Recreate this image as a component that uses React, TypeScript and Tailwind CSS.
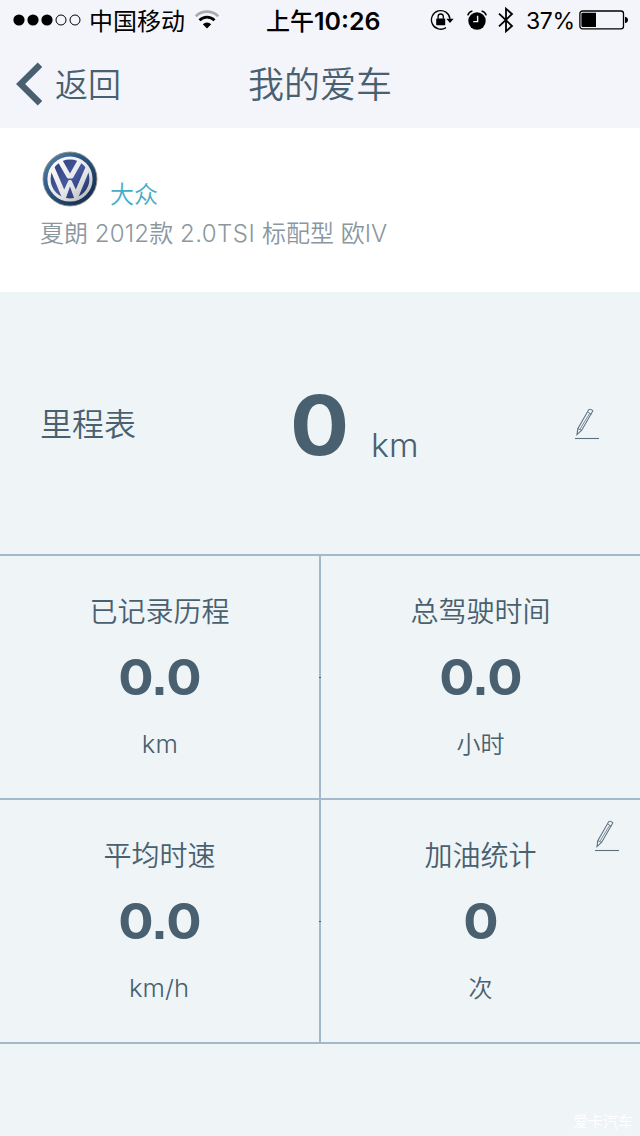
import type { ReactNode } from "react";

const LATIN_CJK = "font-['Inter','Noto_Sans_CJK_SC',sans-serif]";

function SignalDots() {
  return (
    <svg width="68" height="12" viewBox="0 0 68 12" fill="none" stroke="#000">
      <circle cx="6" cy="6" r="5.6" fill="#000" stroke="none" />
      <circle cx="20" cy="6" r="5.6" fill="#000" stroke="none" />
      <circle cx="34" cy="6" r="5.6" fill="#000" stroke="none" />
      <circle cx="48" cy="6" r="5" strokeWidth="1" />
      <circle cx="62" cy="6" r="5" strokeWidth="1" />
    </svg>
  );
}

function Wifi() {
  return (
    <svg width="26" height="20" viewBox="0 0 26 20" fill="none">
      <path d="M1.8 6.2a16 16 0 0 1 22.4 0" stroke="#a9aaae" strokeWidth="2.6" />
      <path d="M5.5 10.2a10.6 10.6 0 0 1 15 0" stroke="#000" strokeWidth="2.8" />
      <path d="M13 18.6 8.8 14.2a6 6 0 0 1 8.4 0z" fill="#000" />
    </svg>
  );
}

function RotationLock() {
  return (
    <svg width="24" height="22" viewBox="0 0 24 22" fill="none" stroke="#000">
      <path d="M16 18.6A9.3 9.3 0 1 1 20 9.8" strokeWidth="1.3" />
      <path d="M16.4 9.7h7.2l-3.6 4.2z" fill="#000" stroke="none" />
      <rect x="6.2" y="9.4" width="9" height="6.8" rx=".6" fill="#000" stroke="none" />
      <path d="M8.1 9.7V7.6a2.6 2.6 0 0 1 5.2 0v2.1" strokeWidth="1.3" />
    </svg>
  );
}

function Alarm() {
  return (
    <svg width="20" height="20" viewBox="0 0 20 20" fill="none" stroke="#000">
      <circle cx="10" cy="11" r="8.7" fill="#000" stroke="none" />
      <path d="M.8 5.4A6 6 0 0 1 5.4 1M14.6 1a6 6 0 0 1 4.6 4.4" strokeWidth="1.6" />
      <path d="M10.6 5.8v5.8H6.2" stroke="#f4f5fa" strokeWidth="1.4" />
    </svg>
  );
}

function Bluetooth() {
  return (
    <svg width="16" height="28" viewBox="0 0 16 28" fill="none" stroke="#000" strokeWidth="1.8">
      <path d="M1 7.6 14 20 8 25.3V2.7L14 8 1 20.4" />
    </svg>
  );
}

function Battery() {
  return (
    <svg width="50" height="20" viewBox="0 0 50 20">
      <rect x=".9" y="1" width="43.6" height="17.8" rx="2.6" fill="none" stroke="#000" strokeWidth="1.3" />
      <path d="M3.8 2.7H17v14.4H3.8a1.4 1.4 0 0 1-1.4-1.4V4.1a1.4 1.4 0 0 1 1.4-1.4z" />
      <path d="M46 6.8c4 .6 4 5.7 0 6.3z" />
    </svg>
  );
}

function Emblem() {
  return (
    <svg width="56" height="56" viewBox="0 0 56 56" fill="none">
      <defs>
        <linearGradient id="ring" x1="0" y1="0" x2="1" y2="1">
          <stop offset="0" stopColor="#5f8fb5" />
          <stop offset=".35" stopColor="#2f5c88" />
          <stop offset="1" stopColor="#0c2444" />
        </linearGradient>
        <linearGradient id="field" x1="0" y1="0" x2="1" y2="1">
          <stop offset="0" stopColor="#2c3a78" />
          <stop offset=".5" stopColor="#45589c" />
          <stop offset="1" stopColor="#1c2a66" />
        </linearGradient>
        <linearGradient id="chrome" gradientUnits="userSpaceOnUse" x1="8" y1="6" x2="48" y2="50">
          <stop offset="0" stopColor="#ffffff" />
          <stop offset=".6" stopColor="#e4e5e8" />
          <stop offset="1" stopColor="#b3b1b1" />
        </linearGradient>
        <clipPath id="inner">
          <circle cx="28" cy="28" r="22" />
        </clipPath>
      </defs>
      <circle cx="28" cy="28" r="27" fill="url(#ring)" stroke="#8f8c86" strokeWidth=".9" />
      <circle cx="28" cy="28" r="21" fill="url(#field)" stroke="url(#chrome)" strokeWidth="3.2" />
      <g clipPath="url(#inner)" fill="url(#chrome)">
        <path d="M14.2 8h5.6L28 22.6 36.2 8h5.6L31.2 26.4q-.6 1-1.6 1h-3.2q-1 0-1.6-1z" />
        <path d="M6.6 14.5h5.2l10.4 24 4-8.6q.5-1 1.3-1h1q.8 0 1.3 1l4 8.6 10.4-24h5.2L35.4 48.5h-2.8L28 35.4 23.4 48.5h-2.8z" />
      </g>
    </svg>
  );
}

function Pencil() {
  return (
    <svg width="26" height="34" viewBox="0 0 26 34" fill="none" stroke="#5d7180">
      <path d="m3 27.6.8-5.8L14.8 2.6q1.8-1.2 4 1.3L7.7 23.2z" strokeWidth="1.1" />
      <path d="m3.8 21.8 3.9 1.4M13.6 5l3.8 2.2M5.8 22.4 15.9 6" strokeWidth=".8" />
      <path d="M1 31.5h24" strokeWidth="1.1" />
    </svg>
  );
}

function Figure({ value }: { value: string }) {
  const [whole, fraction] = value.split(".");
  return (
    <div className="mt-[15px] flex h-[60px] items-baseline justify-center text-[50px] leading-[60px] font-bold">
      <span className="scale-x-[1.05]">{whole}</span>
      {fraction !== undefined && (
        <>
          <span className="flex w-[14px] justify-center font-['Liberation_Sans',sans-serif] text-[54px] leading-10">
            .
          </span>
          <span className="scale-x-[1.05]">{fraction}</span>
        </>
      )}
    </div>
  );
}

type StatProps = { title: string; value: string; unit: string; action?: ReactNode; divided?: boolean };

function Stat({ title, value, unit, action, divided }: StatProps) {
  return (
    <div
      className={
        "relative flex h-[244px] flex-col items-center border-b-2 border-[#a3b9ca] " +
        (divided ? "border-r-2" : "")
      }
    >
      <div className="mt-[36px] h-10 text-[28px] leading-10 font-[350]">{title}</div>
      <Figure value={value} />
      <div
        className={
          "mt-5 h-9 text-[24px] leading-9 font-[350] " + (unit.startsWith("km") ? "scale-x-[1.07]" : "")
        }
      >
        {unit}
      </div>
      {divided && <span className="absolute top-[121px] -right-[2px] h-px w-[2px] bg-[#48606f]" />}
      {action && <div className="absolute top-[19px] right-5">{action}</div>}
    </div>
  );
}

export default function App() {
  return (
    <div className={"flex h-[1136px] w-[640px] flex-col overflow-hidden bg-[#eff4f7] text-[#48606f] " + LATIN_CJK}>
      <header className="h-32 bg-[#f4f5fa]">
        <div className="grid h-10 grid-cols-[266px_164px_1fr] items-center whitespace-nowrap text-black">
          <div className="flex items-center pl-[13px]">
            <SignalDots />
            <span className="ml-2 pt-1 text-[24px] leading-9">中国移动</span>
            <span className="ml-[9px]">
              <Wifi />
            </span>
          </div>
          <div className="flex pt-[3px] text-[24px] leading-9">
            <span className="font-[450]">上午</span>
            <span className="origin-left scale-x-[1.04] font-semibold">10:26</span>
          </div>
          <div className="flex items-center">
            <RotationLock />
            <span className="ml-[13px]">
              <Alarm />
            </span>
            <span className="ml-[11px]">
              <Bluetooth />
            </span>
            <span className="ml-3 w-[48px] pt-[2px] text-[23px] leading-9 tracking-[-0.4px]">37%</span>
            <span className="ml-[5px]">
              <Battery />
            </span>
          </div>
        </div>
        <div className="grid h-[88px] grid-cols-[200px_240px_200px] items-center">
          <div className="flex items-center pl-[16px]">
            <svg width="26" height="44" viewBox="0 0 26 44" fill="none">
              <path d="M24 2.8 4.6 22 24 41.2" stroke="#48606f" strokeWidth="6.4" />
            </svg>
            <span className="ml-[13px] pt-[2px] text-[33px] leading-[48px] font-[350]">返回</span>
          </div>
          <h1 className="pt-[2px] text-center text-[36px] leading-[52px] font-[350]">我的爱车</h1>
        </div>
      </header>

      <section className="h-[164px] bg-white pt-[22px] pl-[40px]">
        <div className="flex h-[60px]">
          <span className="pt-[1px] pl-[2px]">
            <Emblem />
          </span>
          <span className="mt-[27px] ml-[12px] text-[24px] leading-9 font-[350] text-[#45adc6]">大众</span>
        </div>
        <p className="mt-[6px] text-[24px] leading-9 font-[350] whitespace-nowrap text-[#8b979f]">
          夏朗 <span className="tracking-[0.2px]">2012</span>款 <span className="tracking-[0.45px]">2.0TSI</span> 标配型 欧IV
        </p>
      </section>

      <section className="grid h-[262px] grid-cols-[290px_81px_203px_1fr]">
        <span className="mt-[109px] pl-10 text-[32px] leading-[48px] font-[350]">里程表</span>
        <span className="mt-[86px] origin-left scale-x-[1.07] text-[82px] leading-[96px] font-bold">0</span>
        <span className="mt-[130px] origin-left scale-x-[1.06] text-[32px] leading-[48px] font-light">km</span>
        <span className="mt-[115px]">
          <Pencil />
        </span>
      </section>

      <section className="grid h-[490px] grid-cols-[321px_319px] border-t-2 border-[#a3b9ca]">
        <Stat title="已记录历程" value="0.0" unit="km" divided />
        <Stat title="总驾驶时间" value="0.0" unit="小时" />
        <Stat title="平均时速" value="0.0" unit="km/h" divided />
        <Stat title="加油统计" value="0" unit="次" action={<Pencil />} />
      </section>

      <footer className="flex flex-1 items-end justify-end pr-[7px] pb-[2px] text-[15px] leading-6 text-white">
        爱卡汽车
      </footer>
    </div>
  );
}
